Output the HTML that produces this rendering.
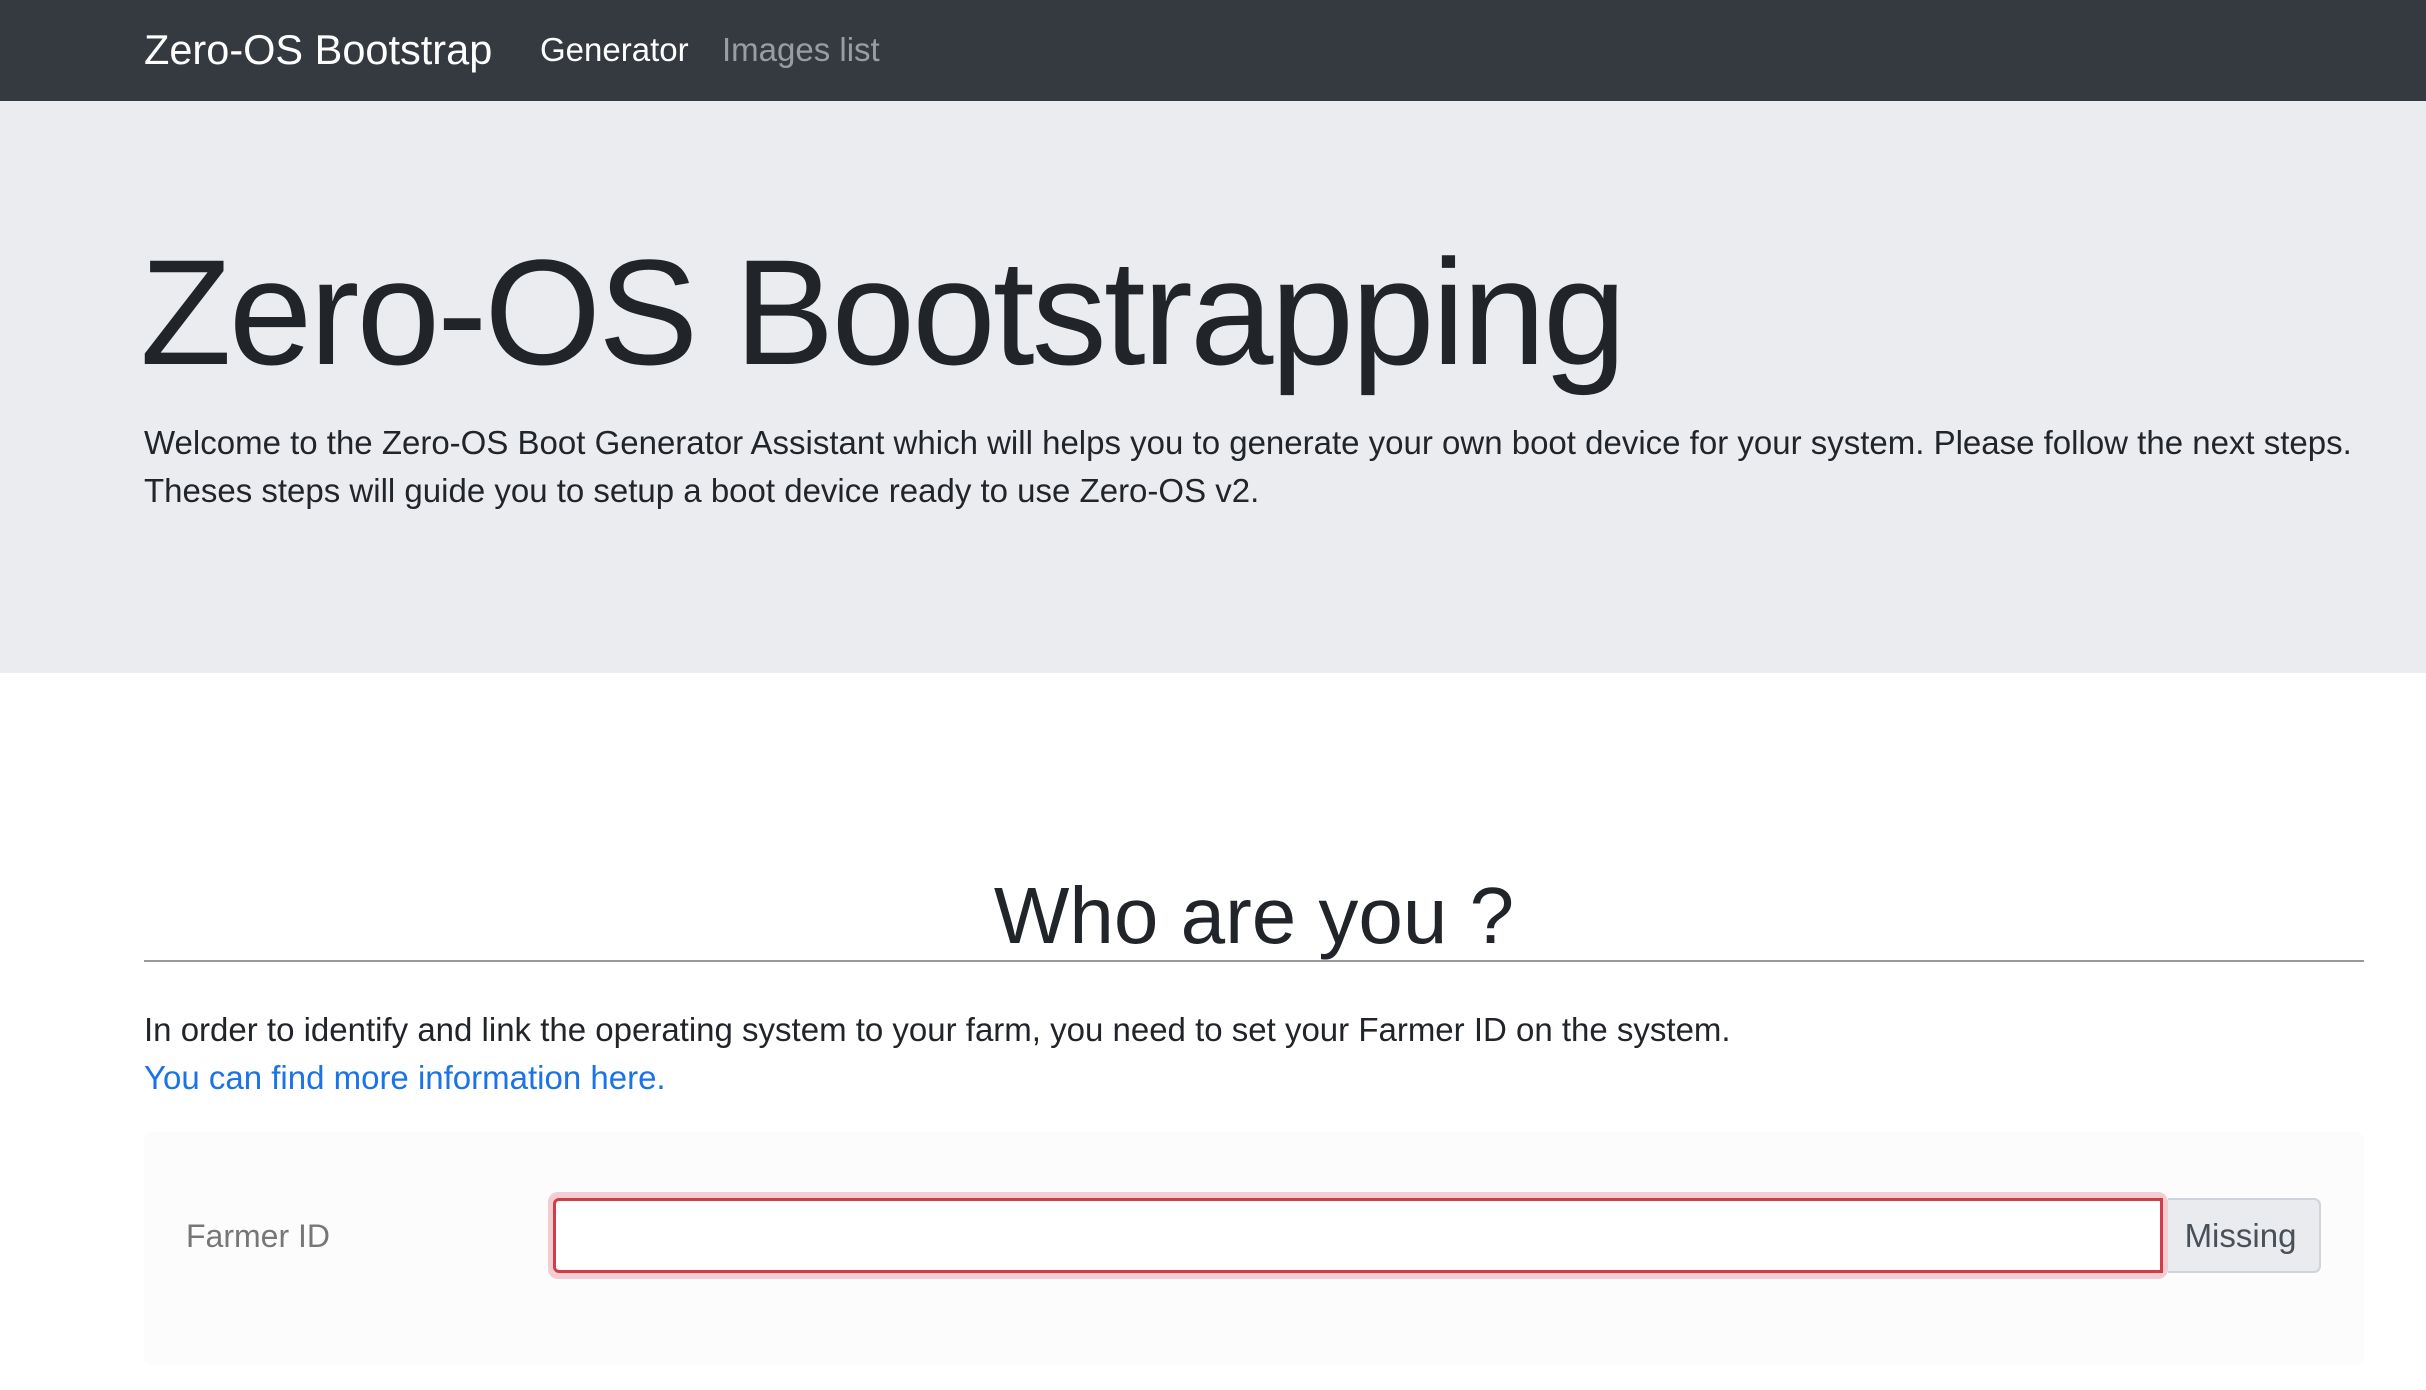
<!DOCTYPE html>
<html><head><meta charset="utf-8"><style>
*{box-sizing:border-box;margin:0;padding:0}
body{width:2426px;height:1390px;overflow:hidden;background:#fff;font-family:"Liberation Sans",sans-serif;color:#212529;position:relative}
.nav{position:absolute;left:0;top:0;width:2426px;height:101px;background:#343a40}
.nav span{position:absolute;top:50px;transform:translateY(-50%);white-space:nowrap}
.jum{position:absolute;left:0;top:101px;width:2426px;height:572px;background:#ebecf0}
.abs{position:absolute;white-space:nowrap}
</style></head><body>
<div class="nav">
<span style="left:144px;font-size:41.5px;color:#fff">Zero-OS Bootstrap</span>
<span style="left:540px;font-size:33px;color:#fff">Generator</span>
<span style="left:722px;font-size:33px;color:rgba(255,255,255,.5)">Images list</span>
</div>
<div class="jum"></div>
<div class="abs" style="left:140px;top:222px;font-size:150px;font-weight:300;letter-spacing:-2.8px;line-height:180px;color:#212529">Zero-OS Bootstrapping</div>
<div class="abs" style="left:144px;top:419px;font-size:33px;line-height:48px">Welcome to the Zero-OS Boot Generator Assistant which will helps you to generate your own boot device for your system. Please follow the next steps.<br>Theses steps will guide you to setup a boot device ready to use Zero-OS v2.</div>
<div class="abs" style="left:144px;width:2220px;top:868px;text-align:center;font-size:80px;line-height:96px">Who are you ?</div>
<div class="abs" style="left:144px;top:960px;width:2220px;height:2px;background:#999"></div>
<div class="abs" style="left:144px;top:1006px;font-size:33px;line-height:48px">In order to identify and link the operating system to your farm, you need to set your Farmer ID on the system.<br><span style="color:#1a73e8">You can find more information here.</span></div>
<div class="abs" style="left:144px;top:1132px;width:2220px;height:233px;background:#fcfcfc;border-radius:8px"></div>
<div class="abs" style="left:186px;top:1216px;font-size:32px;line-height:40px;color:#777">Farmer ID</div>
<div class="abs" style="left:548px;top:1192px;width:1620px;height:87px;background:#f2cdd1;border-radius:10px"></div>
<div class="abs" style="left:553px;top:1198px;width:1610px;height:75px;background:#fff;border:3px solid #d13c48;border-radius:6px 0 0 6px"></div>
<div class="abs" style="left:2168px;top:1198px;width:153px;height:75px;background:#e9ebef;border:2px solid #ced4da;border-left:none;border-radius:0 7px 7px 0;font-size:33px;line-height:71px;text-align:center;color:#495057;padding-right:6px">Missing</div>
</body></html>
